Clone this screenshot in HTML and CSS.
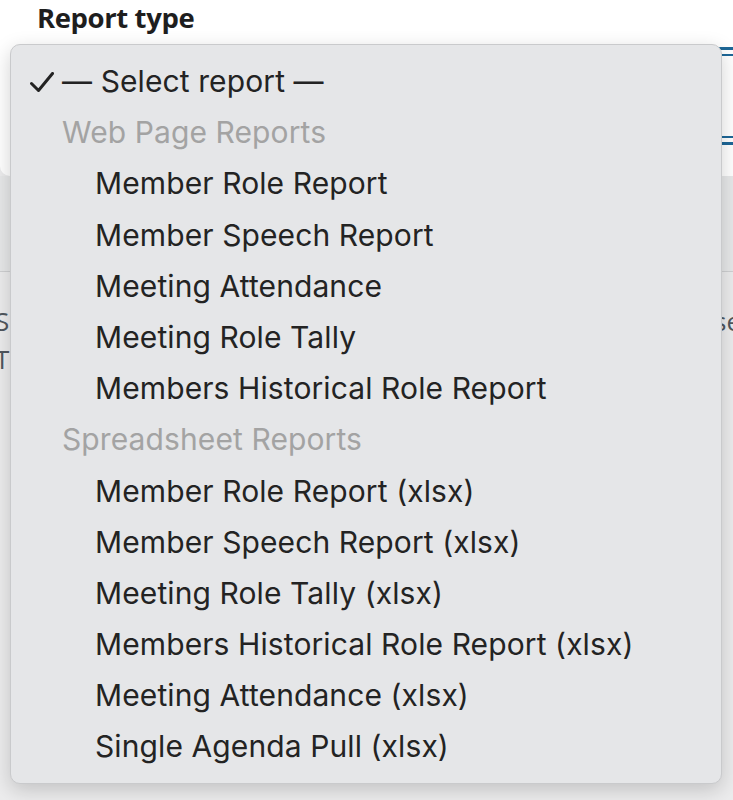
FILE: index.html
```html
<!DOCTYPE html>
<html lang="en">
<head>
    <meta charset="UTF-8">
    <meta name="viewport" content="width=device-width, initial-scale=1.0">
    <title>Reports</title>
    <link rel="stylesheet" href="styles.css">
</head>
<body>
    <div class="card">
        <label class="field-label" for="reportType">Report type</label>
        <div class="field">
            <div class="select-box" id="reportType"></div>
        </div>
    </div>

    <div class="toolbar"></div>

    <div class="notes">
        <p class="note"><span>Si</span><span>se</span></p>
        <p class="note"><span>To</span></p>
    </div>

    <!-- Open dropdown of the report select -->
    <ul class="menu">
        <li class="option selected">
            <svg class="check" width="24" height="22" viewBox="0 0 24 22">
                <path d="M1.5 11.5 L8.5 18.5 L22.5 1.5" fill="none" stroke="#232323" stroke-width="3" stroke-linecap="round" stroke-linejoin="round"/>
            </svg>
            &mdash; Select report &mdash;
        </li>
        <li class="group">Web Page Reports</li>
        <li class="option">Member Role Report</li>
        <li class="option">Member Speech Report</li>
        <li class="option">Meeting Attendance</li>
        <li class="option">Meeting Role Tally</li>
        <li class="option">Members Historical Role Report</li>
        <li class="group">Spreadsheet Reports</li>
        <li class="option">Member Role Report (xlsx)</li>
        <li class="option">Member Speech Report (xlsx)</li>
        <li class="option">Meeting Role Tally (xlsx)</li>
        <li class="option">Members Historical Role Report (xlsx)</li>
        <li class="option">Meeting Attendance (xlsx)</li>
        <li class="option">Single Agenda Pull (xlsx)</li>
    </ul>
</body>
</html>
```

FILE: styles.css
```css
html, body {
    margin: 0;
    height: 100%;
}

body {
    font-family: "Open Sans", Arial, sans-serif;
    background-color: #ececed;
    color: #1e1e1e;
    position: relative;
    overflow: hidden;
}

/* White panel with the field */
.card {
    background-color: #fff;
    height: 176px;
    border-bottom-left-radius: 10px;
    box-sizing: border-box;
    padding: 0 0 0 37px;
}

.field-label {
    display: block;
    font-weight: 700;
    font-size: 27.5px;
    line-height: 36px;
    letter-spacing: -0.4px;
}

.field {
    padding: 11px 0 0 0;
}

.select-box {
    height: 92px;
    margin-right: -10px;
    border-top: 3px solid #1d6797;
    border-bottom: 3px solid #1d6797;
    box-shadow: inset 0 7px 0 -3px #fff, inset 0 9px 0 -3px #1d6797, inset 0 -7px 0 -3px #fff, inset 0 -9px 0 -3px #1d6797;
}

.toolbar {
    height: 95px;
    background-color: #e7e8e9;
    border-bottom: 1px solid #cfd0d2;
}

.notes {
    padding: 30px 0 0 0;
}

.note {
    margin: 0;
    font-size: 26px;
    line-height: 38px;
    color: #50575e;
    display: flex;
    justify-content: space-between;
    margin-left: -5px;
    margin-right: -8px;
}

/* Dropdown */
.menu {
    position: absolute;
    top: 44px;
    left: 10px;
    width: 712px;
    margin: 0;
    padding: 11px 0 10px 0;
    list-style: none;
    box-sizing: border-box;
    background-color: #e5e6e8;
    border: 1px solid #c9cacc;
    border-radius: 10px;
    box-shadow: 0 6px 20px rgba(0, 0, 0, 0.18);
    font-family: Inter, "Noto Sans", sans-serif;
    font-size: 30px;
    letter-spacing: 0.1px;
}

.menu li {
    height: 51.2px;
    line-height: 51.2px;
    white-space: nowrap;
}

.option {
    padding-left: 84px;
    color: #232323;
}

.option.selected {
    padding-left: 51px;
    position: relative;
}

.check {
    position: absolute;
    left: 19px;
    top: 16px;
}

.group {
    padding-left: 51px;
    color: #a3a3a3;
}
```
